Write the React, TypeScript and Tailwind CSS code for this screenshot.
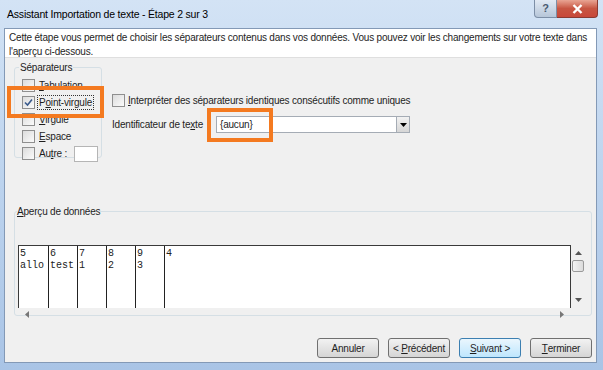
import React from 'react';

const Check = ({ checked = false }: { checked?: boolean }) => (
  <span className="w-[13px] h-[13px] border border-[#8f8f8f] bg-gradient-to-br from-[#dcdcdc] to-[#fbfbfb] flex items-center justify-center shrink-0">
    {checked && (
      <svg width="9" height="9" viewBox="0 0 9 9">
        <path d="M1 4.5 L3.5 7 L8 1.5" stroke="#3a5a8c" strokeWidth="1.6" fill="none" />
      </svg>
    )}
  </span>
);

const Opt = ({ label, u, checked, focus }: { label: string; u: number; checked?: boolean; focus?: boolean }) => (
  <div className="flex items-center gap-[3px] h-[17px] whitespace-nowrap">
    <Check checked={checked} />
    <span className={focus ? 'outline outline-1 outline-dotted outline-[#333] px-[1px] leading-[13px]' : 'px-[1px]'}>
      {label.slice(0, u)}
      <span className="underline">{label[u]}</span>
      {label.slice(u + 1)}
    </span>
  </div>
);

const Btn = ({ children, primary }: { children: React.ReactNode; primary?: boolean }) => (
  <button
    className={`h-[20px] w-[62px] rounded-[3px] border whitespace-nowrap bg-gradient-to-b flex items-center justify-center ${
      primary ? 'border-[#3c7fb1] from-[#eaf6fd] to-[#bee6fd]' : 'border-[#707070] from-[#f2f2f2] to-[#d5d5d5]'
    }`}
  >
    {children}
  </button>
);

const cols = [
  ['5', 'allo'],
  ['6', 'test'],
  ['7', '1'],
  ['8', '2'],
  ['9', '3'],
];

export default function App() {
  return (
    <div className="relative w-[603px] h-[370px] bg-gradient-to-b from-[#d3e3f5] via-[#bcd3ee] to-[#a9c4e6] flex flex-col font-['Liberation_Sans',Arial,sans-serif] text-[10px] tracking-[-0.2px] text-[#1e1e1e] overflow-hidden">
      {/* title bar */}
      <div className="h-[28px] flex justify-between pl-[7px] pr-[5px] shrink-0">
        <div className="pt-[7px] text-[10.5px] text-black">Assistant Importation de texte - Étape 2 sur 3</div>
        <div className="flex h-[18px]">
          <div className="w-[23px] h-full rounded-bl-[4px] border border-[#7c8ea6] border-t-0 bg-gradient-to-b from-[#e1e9f3] to-[#b6c6d9] flex items-center justify-center text-[11px] text-[#4a5a70] font-bold">?</div>
          <div className="w-[41px] h-full rounded-br-[4px] border border-[#8a3a32] border-t-0 border-l-0 bg-gradient-to-b from-[#e8a493] via-[#c75542] to-[#c8483a] flex items-center justify-center">
            <svg width="11" height="10" viewBox="0 0 11 10">
              <path d="M1.5 1 L9.5 9 M9.5 1 L1.5 9" stroke="white" strokeWidth="2.4" />
            </svg>
          </div>
        </div>
      </div>

      {/* client */}
      <div className="flex-1 ml-[4px] mr-[6px] mb-[7px] border border-[#8399b6] bg-[#f0f0f0] flex flex-col">
        <div className="h-[29px] bg-white border-b border-[#dfdfdf] px-[4px] pt-[2px] leading-[14px] shrink-0">
          Cette étape vous permet de choisir les séparateurs contenus dans vos données. Vous pouvez voir les changements sur votre texte dans
          l'aperçu ci-dessous.
        </div>

        <div className="flex pl-[9px] pt-[3px] h-[147px] shrink-0">
          <fieldset className="w-[88px] h-[97px] border border-[#d5dfe5] rounded-[3px] pl-[7px] pt-[3px]">
            <legend className="-ml-[3px] px-[1px] leading-[13px]">Séparateurs</legend>
            <Opt label="Tabulation" u={0} />
            <Opt label="Point-virgule" u={1} checked focus />
            <Opt label="Virgule" u={0} />
            <Opt label="Espace" u={0} />
            <div className="flex items-center gap-[3px] h-[17px] whitespace-nowrap">
              <Check />
              <span className="px-[1px]">
                Au<span className="underline">t</span>re :
              </span>
              <span className="ml-[3px] w-[24px] h-[16px] bg-white border border-[#b5b5b5]" />
            </div>
          </fieldset>

          <div className="pl-[10px] pt-[31px] flex flex-col whitespace-nowrap">
            <div className="flex items-center gap-[3px] h-[17px]">
              <Check />
              <span>
                <span className="underline">I</span>nterpréter des séparateurs identiques consécutifs comme uniques
              </span>
            </div>
            <div className="flex items-center mt-[7px]">
              <span className="w-[104px]">
                Identificateur de te<span className="underline">x</span>te
              </span>
              <div className="w-[194px] h-[17px] bg-white border border-[#a5acb5] flex items-center justify-between pl-[3px]">
                <span>{'{aucun}'}</span>
                <span className="w-[13px] h-[15px] border-l border-[#a5acb5] bg-gradient-to-b from-[#f2f2f2] to-[#d6d6d6] flex items-center justify-center">
                  <svg width="7" height="4" viewBox="0 0 7 4">
                    <path d="M0 0 H7 L3.5 4 Z" fill="#000" />
                  </svg>
                </span>
              </div>
            </div>
          </div>
        </div>

        <fieldset className="mx-[9px] h-[111px] border border-[#d5dfe5] rounded-[3px] pl-[3px] pr-[7px] shrink-0 flex flex-col">
          <legend className="-ml-[1px] leading-[13px]">
            <span className="underline">A</span>perçu de données
          </legend>
          <div className="mt-[27px] flex">
            <div className="w-[553px] h-[63px] bg-white border-t border-l border-r border-[#3a3a3a] flex font-['Liberation_Mono',monospace] text-[10px] tracking-normal leading-[12px] text-[#222]">
              {cols.map((c, i) => (
                <div key={i} className={`w-[29px] h-full pt-[2px] pl-[1px] ${i > 0 ? 'border-l border-[#222]' : ''}`}>
                  <div>{c[0]}</div>
                  <div>{c[1]}</div>
                </div>
              ))}
              <div className="flex-1 h-full pt-[2px] pl-[1px] border-l border-[#222]">4</div>
            </div>
            <div className="w-[12px] h-[63px] flex flex-col items-center pt-[6px] ml-[1px]">
              <svg width="7" height="4" viewBox="0 0 7 4">
                <path d="M0 4 H7 L3.5 0 Z" fill="#555" />
              </svg>
              <div className="w-[12px] h-[12px] mt-[5px] border border-[#9a9a9a] rounded-[2px] bg-gradient-to-r from-[#f4f4f4] to-[#dcdcdc]" />
              <svg className="mt-auto mb-[6px]" width="7" height="4" viewBox="0 0 7 4">
                <path d="M0 0 H7 L3.5 4 Z" fill="#555" />
              </svg>
            </div>
          </div>
          <div className="w-[553px] h-[12px] flex items-center justify-between px-[7px]">
            <svg width="4" height="7" viewBox="0 0 4 7">
              <path d="M4 0 V7 L0 3.5 Z" fill="#777" />
            </svg>
            <svg width="4" height="7" viewBox="0 0 4 7">
              <path d="M0 0 V7 L4 3.5 Z" fill="#777" />
            </svg>
          </div>
        </fieldset>

        <div className="mt-auto mb-[4px] mr-[4px] flex justify-end gap-[9px]">
          <Btn>Annuler</Btn>
          <Btn>
            &lt;&nbsp;<span className="underline">P</span>récédent
          </Btn>
          <Btn primary>
            <span className="underline">S</span>uivant&nbsp;&gt;
          </Btn>
          <Btn>
            <span className="underline">T</span>erminer
          </Btn>
        </div>
      </div>

      {/* orange highlight annotations */}
      <div className="absolute left-[7px] top-[86px] w-[97px] h-[32px] border-[4px] border-[#f47a20]" />
      <div className="absolute left-[207px] top-[108px] w-[66px] h-[34px] border-[4px] border-[#f47a20]" />
    </div>
  );
}
